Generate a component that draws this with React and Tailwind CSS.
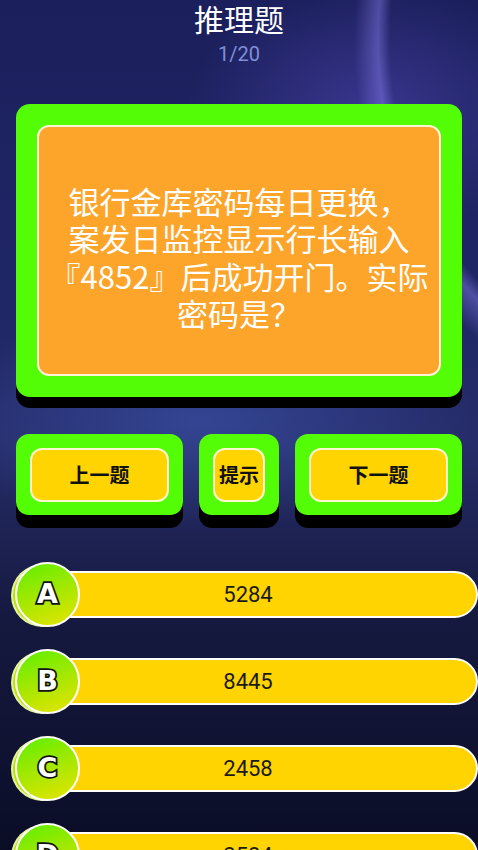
import React from 'react';

const OPTIONS = [
  { key: 'A', value: '5284' },
  { key: 'B', value: '8445' },
  { key: 'C', value: '2458' },
  { key: 'D', value: '2584' },
];

const QUESTION = [
  '银行金库密码每日更换，',
  '案发日监控显示行长输入',
  '『4852』后成功开门。实际',
  '密码是？',
];

function NavButton({ label, width }) {
  return (
    <div
      className={`${width} h-[81px] rounded-[13px] bg-[#52fd06] p-[14px] pb-[13px] shadow-[0_13px_0_#000]`}
    >
      <div className="flex h-full items-center justify-center rounded-[12px] border-2 border-[#fff8d0] bg-[#ffd400]">
        <span className="text-[20px] font-bold text-[#111]">{label}</span>
      </div>
    </div>
  );
}

function OptionRow({ option }) {
  return (
    <div className="relative flex h-[65px] items-center">
      <div className="ml-[40px] flex h-[47px] flex-1 items-center justify-center rounded-r-full border-2 border-white bg-[#ffd400] pr-[22px]">
        <span className="text-[22px] font-normal text-[#1a1a1a] font-['Roboto','Noto_Sans',sans-serif]">
          {option.value}
        </span>
      </div>
      {/* shadow ring behind the letter badge */}
      <div className="absolute left-[11px] top-[2px] h-[63px] w-[63px] rounded-full border-2 border-white/60 bg-[#b9e20c]" />
      <div className="absolute left-[15px] top-0 flex h-[65px] w-[65px] items-center justify-center rounded-full border-2 border-white bg-[linear-gradient(160deg,#5cf000_0%,#9fe800_45%,#e6e400_100%)]">
        <span className="text-[27px] font-black text-white [-webkit-text-stroke:3.5px_#111] [paint-order:stroke_fill] font-['DejaVu_Sans',sans-serif]">
          {option.key}
        </span>
      </div>
    </div>
  );
}

export default function App() {
  return (
    <div className="min-h-[850px] w-full overflow-hidden font-['Noto_Sans_CJK_SC','Noto_Sans',sans-serif] bg-[radial-gradient(ellipse_300px_420px_at_600px_40px,transparent_70%,rgba(150,140,255,0.4)_74%,transparent_82%),radial-gradient(ellipse_260px_180px_at_370px_110px,rgba(110,90,230,0.35),transparent_70%),radial-gradient(ellipse_400px_160px_at_200px_420px,rgba(70,100,200,0.45),transparent_70%),linear-gradient(180deg,#1b1f5c_0%,#202766_35%,#262c68_50%,#15193f_70%,#090b22_100%)]">
      {/* Header */}
      <div className="flex flex-col items-center">
        <h1 className="h-9 text-[30px] leading-9 font-normal text-white">推理题</h1>
        <p className="mt-1.5 text-[20px] leading-6 text-[#7f8fd6] font-['Roboto',sans-serif]">1/20</p>
      </div>

      {/* Question card */}
      <div className="mx-4 mt-[38px] h-[293px] rounded-[14px] bg-[#52fd06] p-[21px] shadow-[0_11px_0_#000]">
        <div className="flex h-full flex-col items-center justify-center rounded-[12px] border-2 border-[#fff3d6] bg-[#fda52a] pt-3">
          {QUESTION.map((line) => (
            <p key={line} className="text-[31px] leading-[37.5px] text-white whitespace-nowrap">
              {line}
            </p>
          ))}
        </div>
      </div>

      {/* Navigation */}
      <div className="mt-[37px] flex gap-4 px-4">
        <NavButton label="上一题" width="w-[167px]" />
        <NavButton label="提示" width="w-[80px]" />
        <NavButton label="下一题" width="w-[167px]" />
      </div>

      {/* Options */}
      <div className="mt-[47px] flex flex-col gap-[22px]">
        {OPTIONS.map((o) => (
          <OptionRow key={o.key} option={o} />
        ))}
      </div>
    </div>
  );
}
